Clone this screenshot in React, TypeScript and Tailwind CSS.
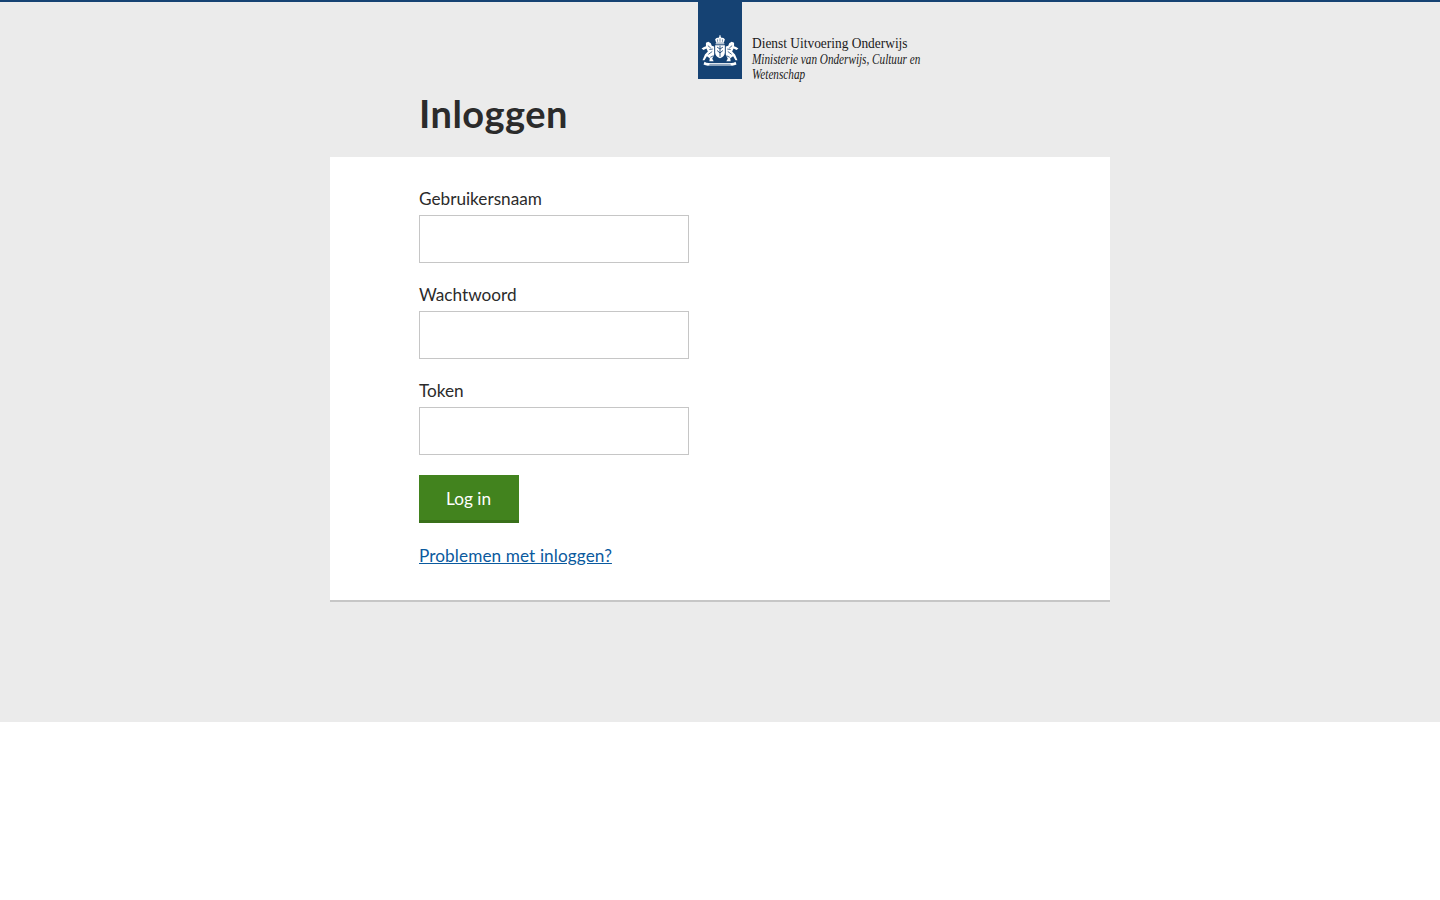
import React from "react";

const Crest: React.FC = () => (
  <svg width="40" height="33" viewBox="0 0 40 34" fill="#fff">
    {/* crown */}
    <path d="M16 9 L15 5.5 Q16.5 3.8 18.3 4 L19.4 2.6 V1.2 H20.6 V2.6 L21.7 4 Q23.5 3.8 25 5.5 L24 9 Z" />
    <path d="M17.5 5.5 V8 M20 4.5 V8 M22.5 5.5 V8" stroke="#154273" strokeWidth="0.6" fill="none" />
    <path d="M15.5 9.6 H24.5 V10.6 H15.5 Z" />
    {/* shield */}
    <path d="M15 11.5 H25 V19 Q25 23 20 25 Q15 23 15 19 Z" />
    <path d="M17 13.5 L20 15.5 L23 13.5 M17 17 L20 19.5 L23 17 M20 12 V23.5" stroke="#154273" strokeWidth="0.9" fill="none" />
    {/* left lion */}
    <path d="M5.5 9 L8 8 L10.5 9.5 L11.5 12 L14 13 V21 L12 25.5 L13.5 28 H9 L9.5 25 L6.5 23 L4 27 H2 L4.5 21 L7.5 18 L6 15 L3 16.5 L1 15 L3.5 13.5 L5.5 12.5 Z" />
    {/* right lion */}
    <path d="M34.5 9 L32 8 L29.5 9.5 L28.5 12 L26 13 V21 L28 25.5 L26.5 28 H31 L30.5 25 L33.5 23 L36 27 H38 L35.5 21 L32.5 18 L34 15 L37 16.5 L39 15 L36.5 13.5 L34.5 12.5 Z" />
    <path
      d="M7.5 12 L10.5 14.5 M8 21 L12 18 M10 24 L13 22.5 M9 16 L12.5 15.5 M32.5 12 L29.5 14.5 M32 21 L28 18 M30 24 L27 22.5 M31 16 L27.5 15.5"
      stroke="#154273"
      strokeWidth="0.8"
      fill="none"
    />
    {/* motto ribbon */}
    <path d="M4 28.5 Q6 30 9 29.8 H31 Q34 30 36 28.5 L37 31.5 Q34 33 31 32.5 H9 Q6 33 3 31.5 Z" />
    <path d="M9 31.2 H31" stroke="#154273" strokeWidth="0.6" fill="none" />
  </svg>
);

const Field: React.FC<{ label: string }> = ({ label }) => (
  <div className="mb-5">
    <label className="block text-[17.2px] leading-[24px] mb-[4px] text-[#2b2b2b]">{label}</label>
    <input type="text" className="block w-[270px] h-[48px] border border-[#c6c6c6] bg-white" />
  </div>
);

export default function App() {
  return (
    <div className="bg-[#ebebeb] h-[722px] border-t-2 border-[#154273] font-['Lato','Open_Sans',sans-serif]">
      <div className="w-[780px] mx-auto">
        <div className="flex pl-[368px] h-[77px]">
          <div className="w-[44px] h-[77px] bg-[#154273] flex items-end justify-center pb-[12px] shrink-0">
            <Crest />
          </div>
          <div className="ml-[10px] pt-[34px] text-[#1a1a1a] font-['Liberation_Serif',serif] whitespace-nowrap">
            <div className="text-[14px] leading-[16px] scale-x-[0.957] origin-left">Dienst Uitvoering Onderwijs</div>
            <div className="text-[14px] leading-[15px] italic scale-x-[0.8] origin-left">
              Ministerie van Onderwijs, Cultuur en
              <br />
              Wetenschap
            </div>
          </div>
        </div>
        <h1 className="pl-[89px] h-[78px] pt-[10px] text-[38px] leading-[48px] font-bold tracking-[0.5px] text-[#2b2b2b]">
          Inloggen
        </h1>
        <div className="bg-white border-b-2 border-[#c6c6c6] h-[445px] pl-[89px] pt-[30px]">
          <Field label="Gebruikersnaam" />
          <Field label="Wachtwoord" />
          <Field label="Token" />
          <button className="block w-[100px] h-[48px] bg-[#42831e] border-b-[3px] border-[#39701a] text-white text-[17.2px] pt-[3px] pr-[1px]">
            Log in
          </button>
          <a href="#" className="block mt-[21px] text-[17.2px] leading-[24px] tracking-[0.1px] text-[#0b5a9e] underline">
            Problemen met inloggen?
          </a>
        </div>
      </div>
    </div>
  );
}
